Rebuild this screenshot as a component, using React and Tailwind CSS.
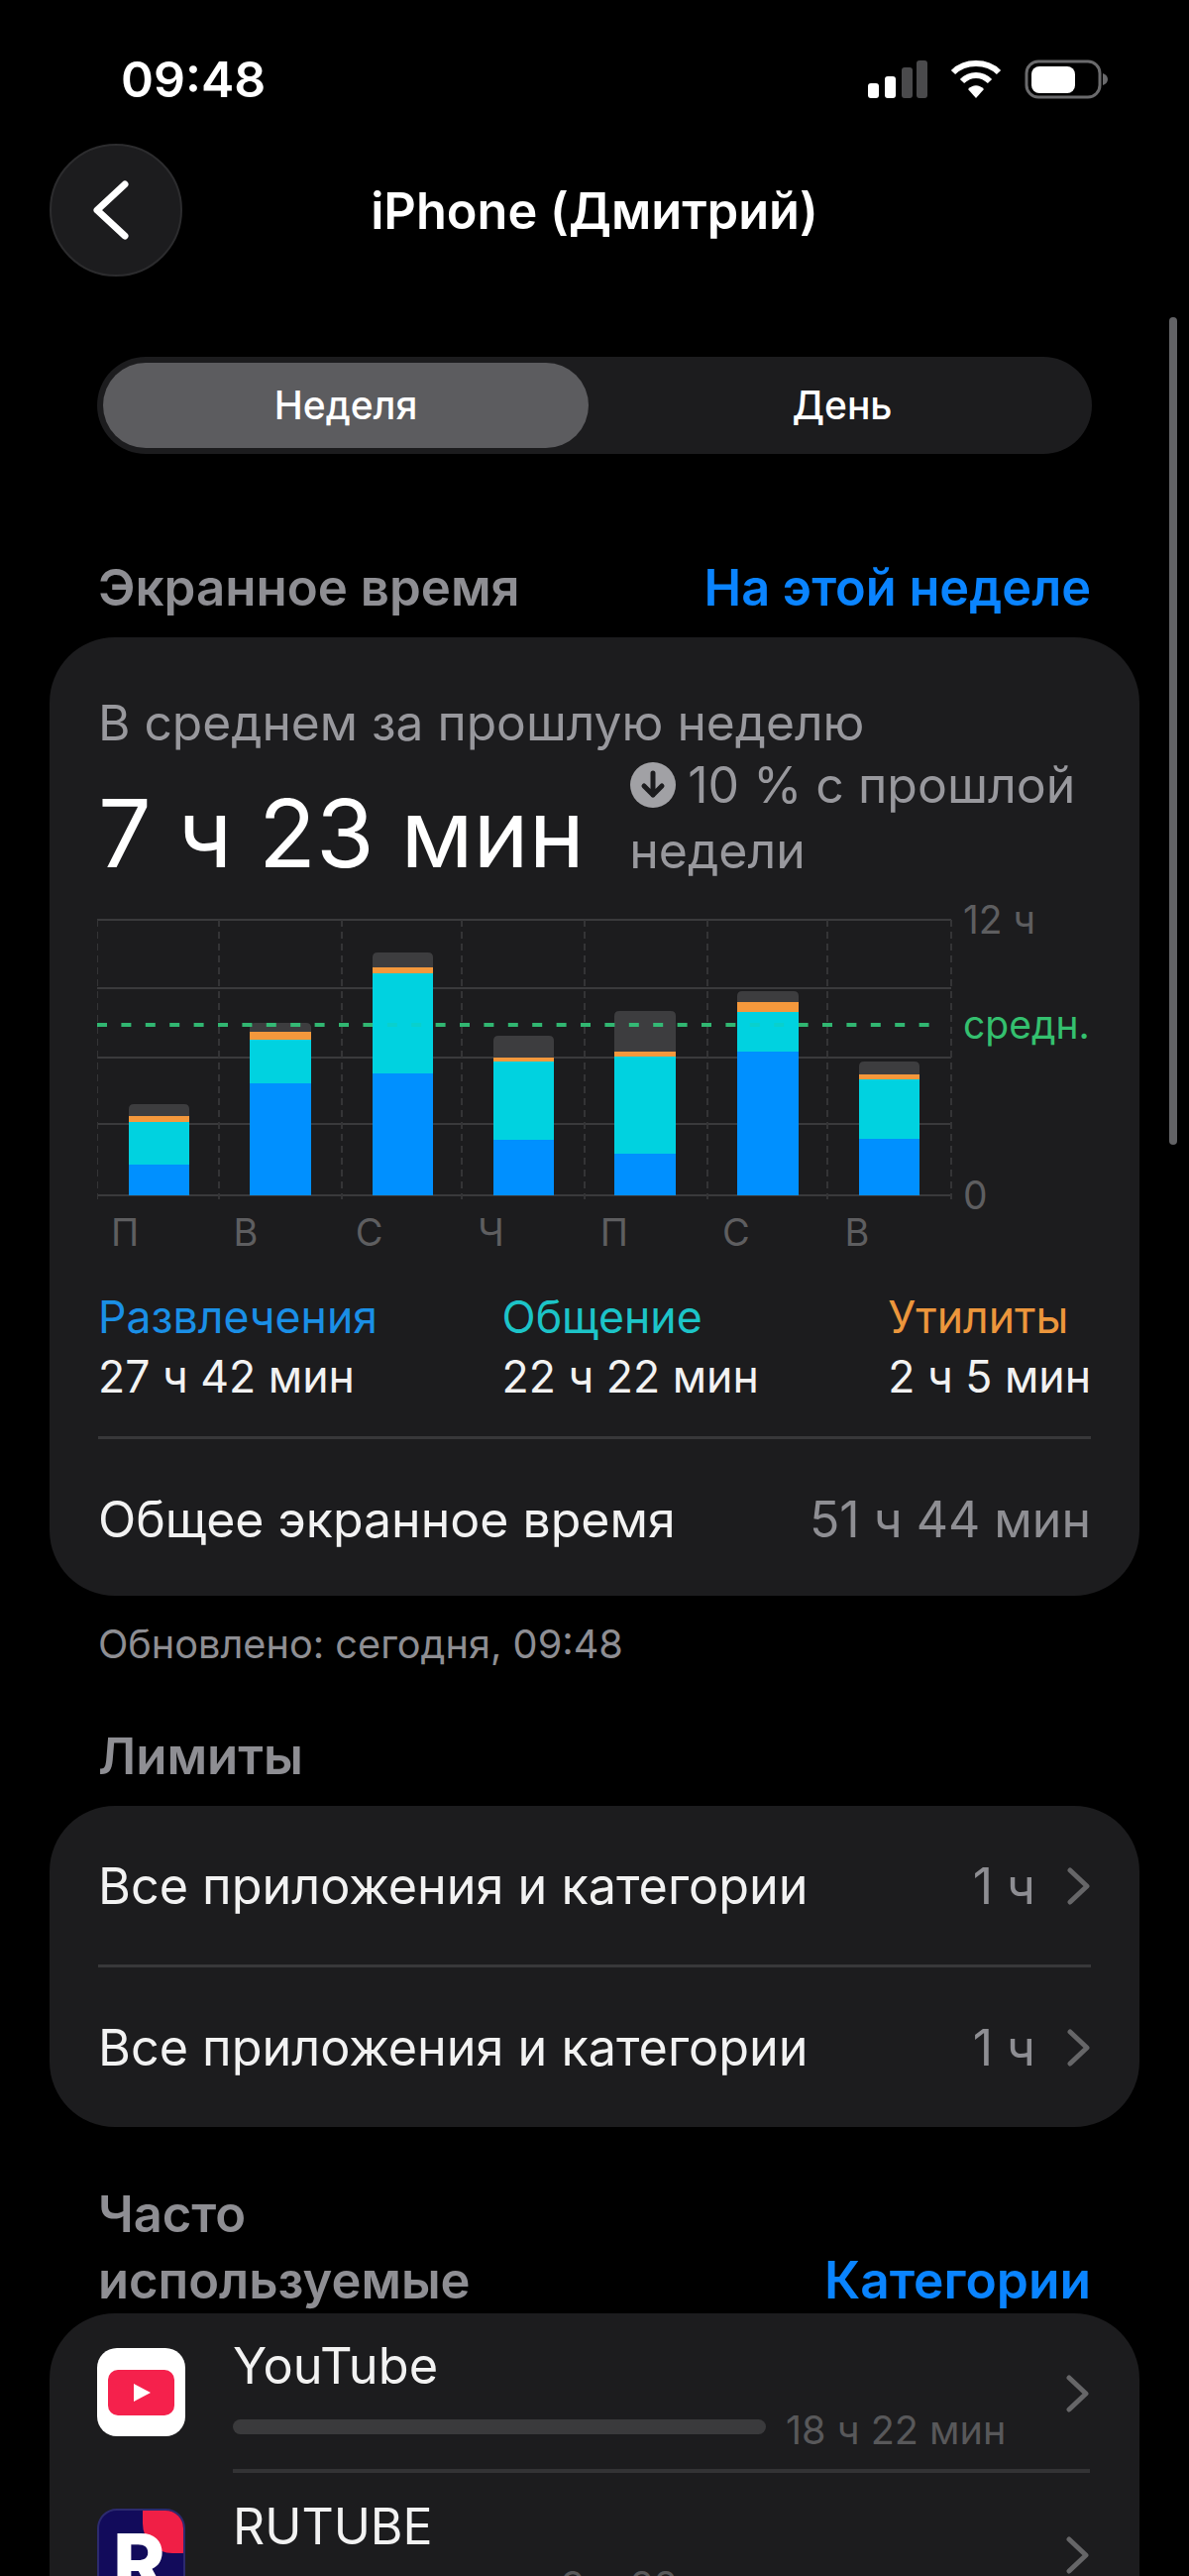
import React from "react";

const F = { fontFamily: "Inter, 'Noto Sans', sans-serif" };

const bars = [
  { x: 130, w: 61, g: 1115, o: 1127, c: 1133, b: 1176 },
  { x: 252, w: 62, g: 1033, o: 1042, c: 1050, b: 1094 },
  { x: 376, w: 61, g: 962, o: 977, c: 983, b: 1084 },
  { x: 498, w: 61, g: 1046, o: 1068, c: 1072, b: 1151 },
  { x: 620, w: 62, g: 1021, o: 1062, c: 1067, b: 1165 },
  { x: 744, w: 62, g: 1001, o: 1012, c: 1022, b: 1062 },
  { x: 867, w: 61, g: 1072, o: 1085, c: 1090, b: 1150 },
];

function Chart() {
  const Y = (v) => v - 921;
  const X = (v) => v - 98;
  return (
    <svg width="864" height="290" className="block shrink-0">
      {[929, 998, 1068, 1135, 1207].map((y) => (
        <line key={y} x1="0" x2="862" y1={Y(y)} y2={Y(y)} stroke="#3a3a3c" strokeWidth="2" />
      ))}
      {[98, 221, 345, 466, 590, 714, 835, 960].map((x) => (
        <line key={x} x1={X(x)} x2={X(x)} y1="8" y2="290" stroke="#343436" strokeWidth="2" strokeDasharray="7 5" />
      ))}
      {bars.map((b) => (
        <g key={b.x}>
          <path
            d={`M${X(b.x)} ${Y(b.o)}V${Y(b.g) + 5}q0 -5 5 -5H${X(b.x) + b.w - 5}q5 0 5 5V${Y(b.o)}z`}
            fill="#3d3d3f"
          />
          <rect x={X(b.x)} y={Y(b.o)} width={b.w} height={b.c - b.o} fill="#f4983c" />
          <rect x={X(b.x)} y={Y(b.c)} width={b.w} height={b.b - b.c} fill="#00d2e0" />
          <rect x={X(b.x)} y={Y(b.b)} width={b.w} height={1207 - b.b} fill="#0090ff" />
        </g>
      ))}
      <line x1="0" x2="850" y1={Y(1035)} y2={Y(1035)} stroke="#34c77b" strokeWidth="4" strokeDasharray="10 14.4" opacity="0.9" />
      {bars
        .filter((b) => b.c < 1030 && b.b > 1040)
        .map((b) => (
          <rect key={b.x} x={X(b.x)} y={Y(1031)} width={b.w} height="8" fill="#00d2e0" opacity="0.8" />
        ))}
    </svg>
  );
}

function Chevron({ className }) {
  return (
    <svg width="24" height="38" viewBox="0 0 24 38" fill="none" className={className}>
      <path d="M3 3l17 16L3 35" stroke="#666668" strokeWidth="5" strokeLinecap="round" strokeLinejoin="round" />
    </svg>
  );
}

function LimitRow() {
  return (
    <div className="flex h-[160px] items-center pt-[2px]">
      <span className="flex-1 text-[50.3px] leading-none text-[#f2f2f2]">Все приложения и категории</span>
      <span className="text-[50px] leading-none text-[#8e8e93]">1 ч</span>
      <Chevron className="ml-[32px]" />
    </div>
  );
}

export default function App() {
  return (
    <div className="relative h-[2599px] w-[1200px] overflow-hidden bg-black text-white" style={F}>
      {/* scrollbar */}
      <div className="absolute left-[1180px] top-[320px] h-[835px] w-[8px] rounded-full bg-[#636366]" />

      {/* status bar */}
      <div className="flex h-[145px] items-start justify-between pl-[122px] pr-[82px] pt-[51px]">
        <span className="text-[50px] font-semibold leading-[58px]">09:48</span>
        <div className="mt-[9px] flex items-center gap-[23px]">
          <svg width="60" height="38" viewBox="0 0 60 38">
            <rect x="0" y="23" width="11" height="15" rx="3" fill="#fff" />
            <rect x="17" y="16" width="11" height="22" rx="3" fill="#fff" />
            <rect x="34" y="7" width="11" height="31" rx="3" fill="#4a4a4c" />
            <rect x="49" y="0" width="11" height="38" rx="3" fill="#4a4a4c" />
          </svg>
          <svg width="52" height="38" viewBox="0 0 52 38" fill="none">
            <path d="M3 12C15 0 37 0 49 12" stroke="#fff" strokeWidth="6" />
            <path d="M12 21C20 13 32 13 40 21" stroke="#fff" strokeWidth="6" />
            <path d="M18 29c5 -5 11 -5 16 0L26 38z" fill="#fff" />
          </svg>
          <svg width="84" height="40" viewBox="0 0 84 40" fill="none">
            <rect x="2" y="2" width="74" height="36" rx="12" stroke="#6a6a6c" strokeWidth="3" />
            <rect x="7" y="7" width="44" height="27" rx="8" fill="#fff" />
            <path d="M79 14c3 1 5 3 5 6s-2 5 -5 6z" fill="#6a6a6c" />
          </svg>
        </div>
      </div>

      {/* nav */}
      <div className="relative flex h-[134px] items-center justify-center pl-[50px] pr-[50px]">
        <button className="absolute left-[50px] top-0 flex h-[134px] w-[134px] items-center justify-center rounded-full border-2 border-[#2c2c2e] bg-[#1c1c1e]">
          <svg width="40" height="60" viewBox="0 0 40 60" fill="none" className="mr-[10px]">
            <path d="M34 4L6 30l28 26" stroke="#fff" strokeWidth="7" strokeLinecap="round" strokeLinejoin="round" />
          </svg>
        </button>
        <span className="pt-[3px] text-[50.5px] font-semibold leading-none">iPhone (Дмитрий)</span>
      </div>

      <div className="px-[50px]">
        {/* segment */}
        <div className="mx-[48px] mt-[81px] flex h-[98px] items-center rounded-full bg-[#1c1c1e] px-[6px] text-[39px] font-medium">
          <div className="flex h-[86px] w-[490px] items-center justify-center rounded-full bg-[#5c5c5f]">Неделя</div>
          <div className="flex flex-1 items-center justify-center pl-[10px]">День</div>
        </div>

        {/* screen time header */}
        <div className="mx-[49px] mt-[107px] flex h-[56px] items-center justify-between">
          <span className="text-[51px] font-semibold text-[#8e8e93]">Экранное время</span>
          <span className="text-[50.5px] font-semibold text-[#0a84ff]">На этой неделе</span>
        </div>

        {/* main card */}
        <div className="mt-[22px] h-[967px] rounded-[66px] bg-[#1c1c1e] px-[49px] pt-[58px]">
          <div className="text-[49.7px] leading-[56px] text-[#98989d]">В среднем за прошлую неделю</div>
          <div className="mt-[2px] flex h-[148px]">
            <div className="w-[541px] pt-[24px] text-[95px] font-normal leading-[116px]">7 ч 23 мин</div>
            <div className="w-[470px] whitespace-nowrap text-[50px] leading-[66px] text-[#98989d]">
              <div className="flex items-center">
                <svg width="48" height="48" viewBox="0 0 48 48" className="mr-[11px] shrink-0">
                  <circle cx="24" cy="24" r="23" fill="#a1a1a5" />
                  <path d="M24 12v22M15 25l9 9 9-9" fill="none" stroke="#1c1c1e" strokeWidth="5" strokeLinecap="round" strokeLinejoin="round" />
                </svg>
                10 % с прошлой
              </div>
              <div>недели</div>
            </div>
          </div>

          {/* chart */}
          <div className="-mx-[1px] mt-[13px] flex">
            <div className="w-[864px]">
              <Chart />
              <div className="flex h-[58px] text-[38px] leading-[66px] text-[#5e5e60]">
                {["П", "В", "С", "Ч", "П", "С", "В"].map((d, i) => (
                  <div key={i} className="flex-1 pl-[14px]">{d}</div>
                ))}
              </div>
            </div>
            <div className="ml-[10px] whitespace-nowrap text-[39px] leading-[44px]">
              <div className="mt-[-14px] text-[#5e5e60]">12 ч</div>
              <div className="mt-[62px] text-[#34c06f]">средн.</div>
              <div className="mt-[128px] text-[#5e5e60]">0</div>
            </div>
          </div>

          {/* legend */}
          <div className="mt-[33px] flex text-[44.6px] leading-[56px]">
            <div className="w-[408px]">
              <div className="text-[#1a8fe6]">Развлечения</div>
              <div className="mt-[4px] text-[#f2f2f2]">27 ч 42 мин</div>
            </div>
            <div className="w-[390px]">
              <div className="text-[#1cc4c8]">Общение</div>
              <div className="mt-[4px] text-[#f2f2f2]">22 ч 22 мин</div>
            </div>
            <div className="flex-1 whitespace-nowrap">
              <div className="text-[#ec963c]">Утилиты</div>
              <div className="mt-[4px] text-[#f2f2f2]">2 ч 5 мин</div>
            </div>
          </div>
          <div className="mt-[32px] h-[3px] bg-[#38383a]" />
          <div className="mt-[53px] flex items-center justify-between text-[50px] leading-[56px]">
            <span className="text-[#f2f2f2]">Общее экранное время</span>
            <span className="text-[#8e8e93]">51 ч 44 мин</span>
          </div>
        </div>

        <div className="ml-[49px] mt-[27px] text-[39.7px] leading-[44px] text-[#8e8e93]">Обновлено: сегодня, 09:48</div>
        <div className="ml-[49px] mt-[63px] text-[51px] font-semibold leading-[56px] text-[#8e8e93]">Лимиты</div>

        {/* limits */}
        <div className="mt-[22px] h-[324px] rounded-[66px] bg-[#1c1c1e] px-[49px]">
          <LimitRow />
          <div className="h-[3px] bg-[#38383a]" />
          <LimitRow />
        </div>

        {/* frequently used */}
        <div className="mx-[49px] mt-[54px] flex items-end justify-between font-semibold leading-[67px]">
          <span className="text-[50.7px] text-[#8e8e93]">Часто<br />используемые</span>
          <span className="text-[51.5px] text-[#0a84ff]">Категории</span>
        </div>

        <div className="h-[400px] rounded-t-[66px] bg-[#1c1c1e] pl-[48px] pr-[50px]">
          <div className="flex h-[157px]">
            <div className="mt-[35px] flex h-[89px] w-[89px] shrink-0 items-center justify-center rounded-[20px] bg-white">
              <svg width="67" height="46" viewBox="0 0 67 46">
                <rect width="67" height="46" rx="10" fill="#f5214c" />
                <path d="M26 14l17 9-17 9z" fill="#fff" />
              </svg>
            </div>
            <div className="ml-[48px] flex-1">
              <div className="mt-[28px] text-[50.5px] leading-[50px] text-[#f2f2f2]">YouTube</div>
              <div className="mt-[10px] flex items-center">
                <div className="h-[15px] w-[538px] rounded-full bg-[#3a3a3c]" />
                <span className="ml-[20px] mt-[8px] text-[39.6px] leading-[44px] text-[#58585a]">18 ч 22 мин</span>
              </div>
            </div>
            <Chevron className="mt-[62px]" />
          </div>
          <div className="ml-[137px] h-[4px] bg-[#333335]" />
          <div className="flex h-[150px]">
            <div className="relative mt-[36px] h-[89px] w-[89px] shrink-0 overflow-hidden rounded-[20px] border-2 border-[#2c2a6e] bg-[#120b5b]">
              <div className="absolute left-[44px] top-[-10px] h-[53px] w-[60px] rounded-bl-[30px] bg-[#f01f46]" />
              <div className="absolute left-[14px] top-[12px] text-[80px] font-extrabold leading-[80px] text-white">R</div>
            </div>
            <div className="ml-[48px] flex-1">
              <div className="mt-[29px] text-[50px] leading-[50px] text-[#f2f2f2]">RUTUBE</div>
              <div className="ml-[331px] mt-[13px] text-[39.6px] leading-[44px] text-[#58585a]">9 ч 22 мин</div>
            </div>
            <Chevron className="mt-[64px]" />
          </div>
        </div>
      </div>
    </div>
  );
}
